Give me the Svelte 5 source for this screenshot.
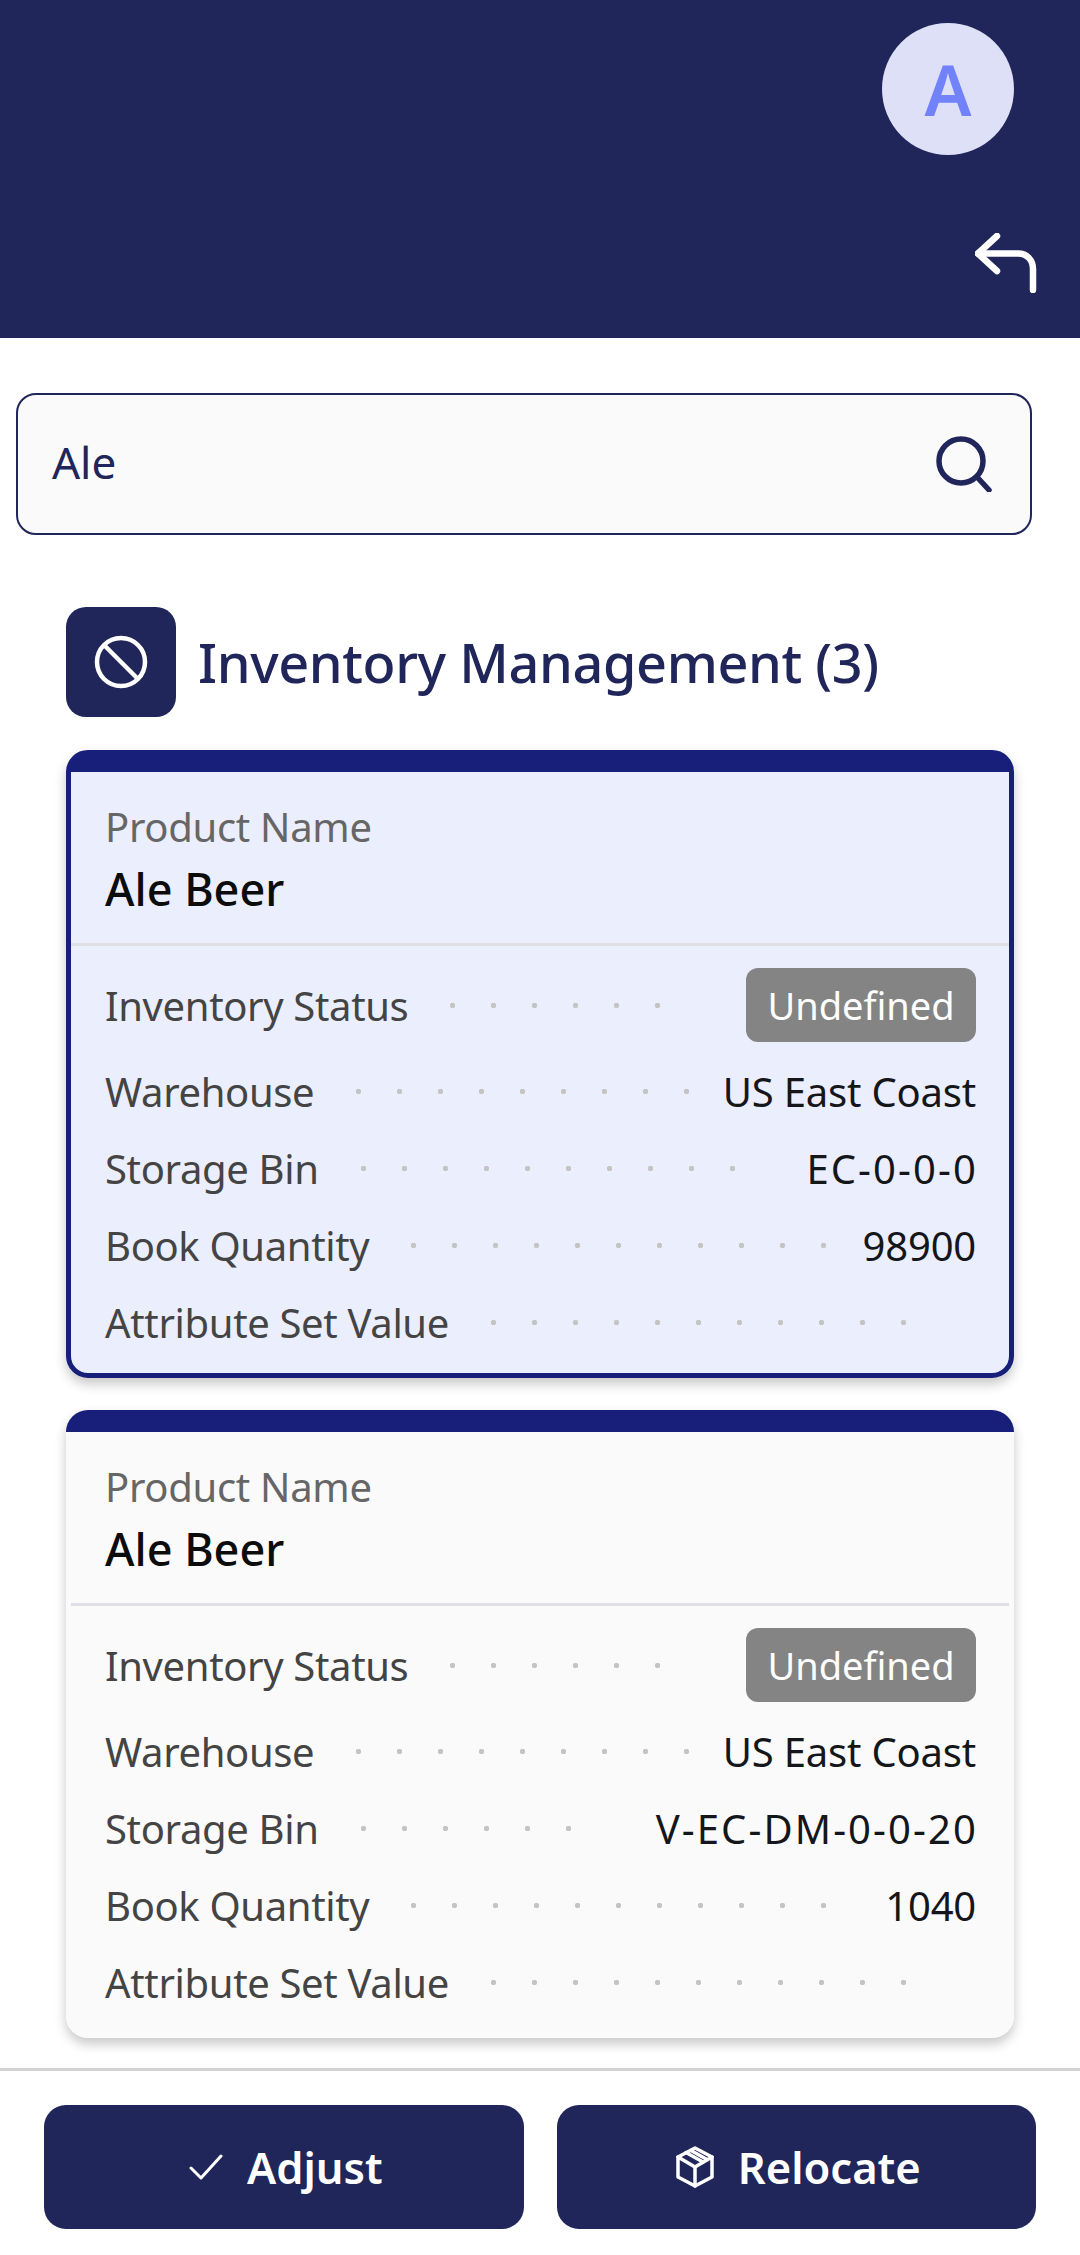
<script>
  const dots = Array.from({ length: 20 });

  const items = [
    { bin: "EC-0-0-0", qty: "98900", selected: true },
    { bin: "V-EC-DM-0-0-20", qty: "1040", selected: false },
  ];
</script>

{#snippet leader()}
  <span class="leader">
    {#each dots as _}<i></i>{/each}
  </span>
{/snippet}

<div class="page">
  <header class="top">
    <div class="avatar">A</div>
    <svg class="back" viewBox="0 0 62 60" fill="none" stroke="#fff" stroke-width="6.500" stroke-linecap="round" stroke-linejoin="round">
      <path d="M22 3 3 20.500 22 38" />
      <path d="M3 20.500H43C52 20.500 58 27 58 36V57" />
    </svg>
  </header>

  <div class="search">
    <span class="query">Ale</span>
    <svg viewBox="0 0 56 56" fill="none" stroke="#20265a" stroke-width="5.500" stroke-linecap="round">
      <circle cx="25" cy="25" r="22" />
      <path d="M41 41 53 54" />
    </svg>
  </div>

  <main class="content">
    <div class="title">
      <span class="title-icon">
        <svg viewBox="0 0 54 54" fill="none" stroke="#fff" stroke-width="4.500">
          <circle cx="27" cy="27" r="24" />
          <path d="M10 10 44 44" />
        </svg>
      </span>
      <h1>Inventory Management (3)</h1>
    </div>

    <div class="cards">
      {#each items as item}
        <section class="card" class:selected={item.selected}>
          <div class="head">
            <div class="caption">Product Name</div>
            <div class="name">Ale Beer</div>
          </div>
          <div class="rows">
            <div class="row status">
              <span class="label">Inventory Status</span>
              {@render leader()}
              <span class="badge">Undefined</span>
            </div>
            <div class="row">
              <span class="label">Warehouse</span>
              {@render leader()}
              <span class="value">US East Coast</span>
            </div>
            <div class="row">
              <span class="label">Storage Bin</span>
              {@render leader()}
              <span class="value bin">{item.bin}</span>
            </div>
            <div class="row">
              <span class="label">Book Quantity</span>
              {@render leader()}
              <span class="value">{item.qty}</span>
            </div>
            <div class="row">
              <span class="label">Attribute Set Value</span>
              {@render leader()}
            </div>
          </div>
        </section>
      {/each}
    </div>
  </main>

  <footer class="actions">
    <button>
      <svg class="check" viewBox="0 0 34 26" fill="none" stroke="#fff" stroke-width="3" stroke-linecap="round" stroke-linejoin="round">
        <path d="M2 14 12 24 32 2" />
      </svg>
      Adjust
    </button>
    <button>
      <svg class="box" viewBox="0 0 38 42" fill="none" stroke="#fff" stroke-width="3.500" stroke-linejoin="round" stroke-linecap="round">
        <path d="M19 2 36 11V31L19 40 2 31V11Z" />
        <path d="M2 11 19 21 36 11M19 21V40" />
        <path d="M10 6.500 27 16M15 4.500 31 13.500" />
      </svg>
      Relocate
    </button>
  </footer>
</div>

<style>
  :global(body) {
    background: #fff;
  }

  .page {
    width: 1080px;
    height: 2255px;
    overflow: hidden;
    font-family: "Noto Sans", sans-serif;
    color: #20265a;
  }

  .top {
    height: 338px;
    background: #20265a;
    display: flex;
    flex-direction: column;
    align-items: flex-end;
    padding: 23px 43px 0 0;
    box-sizing: border-box;
  }

  .avatar {
    width: 132px;
    height: 132px;
    margin-right: 23px;
    border-radius: 50%;
    background: #dde0f7;
    color: #7282fb;
    font-size: 70px;
    font-weight: 600;
    display: flex;
    align-items: center;
    justify-content: center;
  }

  .back {
    width: 62px;
    height: 60px;
    margin-top: 78px;
  }

  .search {
    margin: 55px 48px 0 16px;
    height: 142px;
    box-sizing: border-box;
    border: 2px solid #20265a;
    border-radius: 20px;
    background: #fafafa;
    display: flex;
    align-items: center;
    justify-content: space-between;
    padding: 0 38px 4px 34px;
  }

  .query {
    font-size: 44px;
  }

  .search svg {
    width: 56px;
    height: 56px;
    margin-top: 4px;
  }

  .content {
    padding: 72px 66px 30px 66px;
  }

  .title {
    display: flex;
    align-items: center;
    gap: 22px;
    margin-bottom: 33px;
  }

  .title-icon {
    width: 110px;
    height: 110px;
    border-radius: 20px;
    background: #20265a;
    display: flex;
    align-items: center;
    justify-content: center;
  }

  .title-icon svg {
    width: 54px;
    height: 54px;
  }

  h1 {
    margin: 0;
    font-size: 54px;
    font-weight: 500;
    letter-spacing: -0.4px;
  }

  .cards {
    display: flex;
    flex-direction: column;
    gap: 32px;
  }

  .card {
    height: 628px;
    box-sizing: border-box;
    border: 5px solid transparent;
    border-radius: 22px;
    background: linear-gradient(#171f7a 22px, #fafafa 22px) border-box;
    box-shadow: 0 6px 12px rgba(0, 0, 0, 0.22);
  }

  .card.selected {
    border-color: #171f7a;
    background: linear-gradient(#171f7a 22px, #ebeefd 22px) border-box;
  }

  .head {
    height: 191px;
    box-sizing: border-box;
    padding: 46px 34px 0;
    border-bottom: 3px solid #e0e0e4;
  }

  .caption {
    font-size: 40px;
    line-height: 52px;
    letter-spacing: -0.3px;
    color: #666;
  }

  .name {
    font-size: 45px;
    line-height: 71px;
    font-weight: 500;
    color: #0c0c0c;
  }

  .rows {
    padding: 22px 33px 0 34px;
  }

  .row {
    display: flex;
    align-items: center;
    height: 77px;
    font-size: 40px;
  }

  .row.status {
    height: 74px;
    margin-bottom: 11px;
  }

  .label {
    color: #444;
    white-space: nowrap;
    letter-spacing: -0.35px;
  }

  .leader {
    flex: 1;
    min-width: 0;
    height: 5px;
    overflow: hidden;
    display: flex;
    flex-wrap: wrap;
    margin: 0 15px 0 24px;
  }

  .leader i {
    width: 41px;
    height: 5px;
    flex: none;
    background: radial-gradient(circle at center, #c4c4c4 2.500px, transparent 3px);
  }

  .value {
    color: #15161a;
    white-space: nowrap;
    letter-spacing: -0.2px;
  }

  .value.bin {
    letter-spacing: 2.100px;
    margin: 0 -2px 0 14px;
  }

  .badge {
    width: 230px;
    height: 74px;
    margin-left: 18px;
    border-radius: 12px;
    background: #848484;
    color: #fff;
    font-size: 38px;
    display: flex;
    align-items: center;
    justify-content: center;
  }

  .actions {
    border-top: 3px solid #d2d2d2;
    padding: 34px 44px 0;
    display: grid;
    grid-template-columns: 1fr 1fr;
    gap: 33px;
  }

  button {
    height: 124px;
    border: none;
    border-radius: 22px;
    background: #20265a;
    color: #fff;
    font-family: inherit;
    font-size: 43.500px;
    font-weight: 600;
    display: flex;
    align-items: center;
    justify-content: center;
    gap: 24px;
    padding: 0 0 0 4px;
  }

  .check {
    width: 34px;
    height: 26px;
  }

  .box {
    width: 38px;
    height: 42px;
  }
</style>
